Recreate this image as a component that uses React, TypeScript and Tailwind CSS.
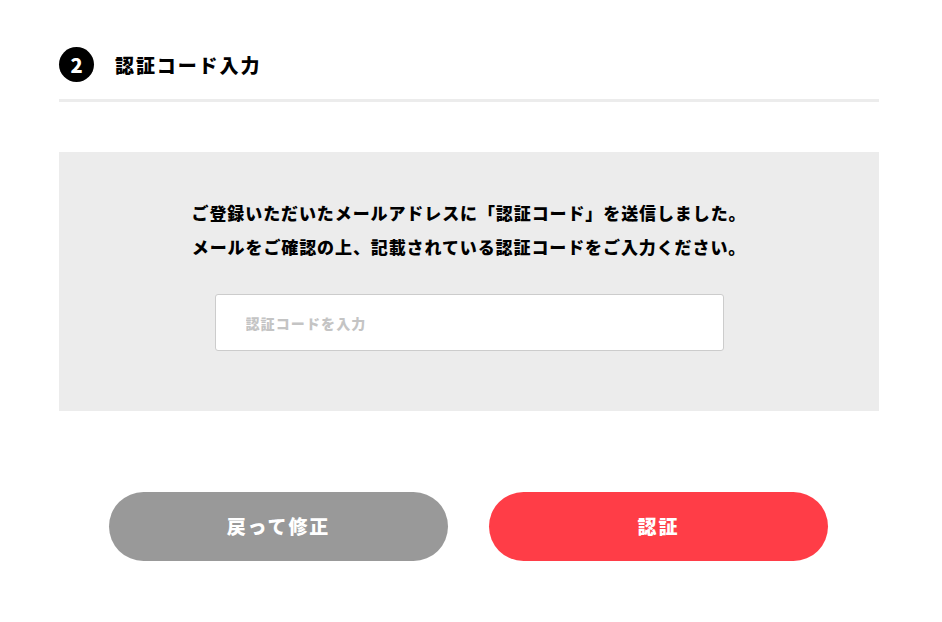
export default function App() {
  return (
    <div
      className="w-[942px] h-[622px] bg-white text-black"
      style={{ fontFamily: '"Noto Sans CJK JP", "Noto Sans", sans-serif' }}
    >
      <div className="w-[820px] ml-[59px] pt-[47px]">
        <div className="flex items-center h-[35px]">
          <div className="w-[35px] h-[35px] rounded-full bg-black text-white flex items-center justify-center font-black text-[20px] leading-none">
            2
          </div>
          <div className="ml-[21px] font-black text-[19px] tracking-[0.1em] leading-none">認証コード入力</div>
        </div>
        <div className="mt-[17px] h-[3px] bg-[#ececec]" />
        <div className="mt-[50px] h-[259px] bg-[#ececec] flex flex-col items-center pt-[44px]">
          <div className="font-black text-[17px] leading-[34px] tracking-[0.9px] text-center">
            <p>ご登録いただいたメールアドレスに「認証コード」を送信しました。</p>
            <p>メールをご確認の上、記載されている認証コードをご入力ください。</p>
          </div>
          <input
            className="mt-[30px] w-[509px] h-[57px] bg-white border border-[#cccccc] rounded-[3px] px-[30px] text-[14px] font-black tracking-[0.08em] outline-none placeholder:text-[#c4c4c4]"
            placeholder="認証コードを入力"
          />
        </div>
        <div className="mt-[81px] flex justify-center gap-[41px] -ml-px">
          <button className="w-[339px] h-[69px] rounded-full bg-[#999999] text-white font-black text-[19px] tracking-[0.1em]">
            戻って修正
          </button>
          <button className="w-[339px] h-[69px] rounded-full bg-[#ff3d47] text-white font-black text-[19px] tracking-[0.1em]">
            認証
          </button>
        </div>
      </div>
    </div>
  );
}
